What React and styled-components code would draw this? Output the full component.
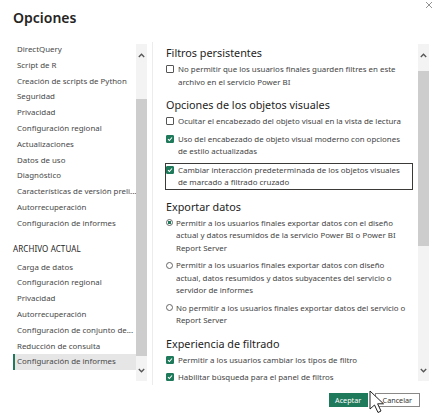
import React from 'react';
import styled, { createGlobalStyle } from 'styled-components';

const GREEN = '#1f7a5c';

const GlobalStyle = createGlobalStyle`
  html, body {
    margin: 0;
    padding: 0;
    background: #fff;
  }
  body {
    font-family: "Noto Sans", "Open Sans", sans-serif;
    color: #333;
  }
`;

const general = [
  'DirectQuery',
  'Script de R',
  'Creación de scripts de Python',
  'Seguridad',
  'Privacidad',
  'Configuración regional',
  'Actualizaciones',
  'Datos de uso',
  'Diagnóstico',
  'Características de versión preli...',
  'Autorrecuperación',
  'Configuración de informes',
];

const current = [
  'Carga de datos',
  'Configuración regional',
  'Privacidad',
  'Autorrecuperación',
  'Configuración de conjunto de...',
  'Reducción de consulta',
  'Configuración de informes',
];

const Chevron = ({ down }) => (
  <svg width='7' height='5' viewBox='0 0 7 5'>
    <polyline
      points={down ? '0.8,1 3.5,3.8 6.2,1' : '0.8,4 3.5,1.2 6.2,4'}
      fill='none'
      stroke='#555'
      strokeWidth='1.3'
    />
  </svg>
);

const Scrollbar = ({ thumbTop, thumbHeight }) => (
  <Track>
    <ArrowCell>
      <Chevron />
    </ArrowCell>
    <Rail>
      <Thumb $top={thumbTop} $height={thumbHeight} />
    </Rail>
    <ArrowCell>
      <Chevron down />
    </ArrowCell>
  </Track>
);

const Check = ({ checked }) => (
  <CheckBox $checked={checked}>
    {checked && (
      <svg width='6' height='6' viewBox='0 0 6 6'>
        <polyline points='1,3.2 2.4,4.5 5,1.5' fill='none' stroke='#fff' strokeWidth='1.1' />
      </svg>
    )}
  </CheckBox>
);

const Option = ({ checked, lines }) => (
  <Item>
    <Check checked={checked} />
    <Label>
      {lines.map((l, i) => (
        <div key={i}>{l}</div>
      ))}
    </Label>
  </Item>
);

const RadioOption = ({ checked, lines }) => (
  <Item $radio>
    <Radio $checked={checked} />
    <Label>
      {lines.map((l, i) => (
        <div key={i}>{l}</div>
      ))}
    </Label>
  </Item>
);

const App = () => {
  return (
    <Dialog>
      <GlobalStyle />
      <Header>
        <Title>Opciones</Title>
        <Close>
          <svg width='8' height='8' viewBox='0 0 8 8'>
            <path d='M1 1 L7 7 M7 1 L1 7' stroke='#777' strokeWidth='0.8' />
          </svg>
        </Close>
      </Header>
      <Body>
        <Nav>
          <NavList>
            {general.map((t) => (
              <NavItem key={t}>{t}</NavItem>
            ))}
            <NavGroup>ARCHIVO ACTUAL</NavGroup>
            {current.map((t, i) => (
              <NavItem key={t + i} $selected={i === current.length - 1}>
                {t}
              </NavItem>
            ))}
          </NavList>
          <Scrollbar thumbTop={33} thumbHeight={257} />
        </Nav>
        <Content>
          <Inner>
            <Heading $first>Filtros persistentes</Heading>
            <Option
              lines={[
                'No permitir que los usuarios finales guarden filtres en este',
                'archivo en el servicio Power BI',
              ]}
            />
            <Heading>Opciones de los objetos visuales</Heading>
            <Option lines={['Ocultar el encabezado del objeto visual en la vista de lectura']} />
            <Option
              checked
              lines={['Uso del encabezado de objeto visual moderno con opciones', 'de estilo actualizadas']}
            />
            <Focused>
              <Option
                checked
                lines={['Cambiar interacción predeterminada de los objetos visuales', 'de marcado a filtrado cruzado']}
              />
            </Focused>
            <Heading>Exportar datos</Heading>
            <RadioOption
              checked
              lines={[
                'Permitir a los usuarios finales exportar datos con el diseño',
                'actual y datos resumidos de la servicio Power BI o Power BI',
                'Report Server',
              ]}
            />
            <RadioOption
              lines={[
                'Permitir a los usuarios finales exportar datos con diseño',
                'actual, datos resumidos y datos subyacentes del servicio o',
                'servidor de informes',
              ]}
            />
            <RadioOption
              lines={['No permitir a los usuarios finales exportar datos del servicio o', 'Report Server']}
            />
            <Heading>Experiencia de filtrado</Heading>
            <Option checked lines={['Permitir a los usuarios cambiar los tipos de filtro']} />
            <Option checked lines={['Habilitar búsqueda para el panel de filtros']} />
          </Inner>
          <Scrollbar thumbTop={5} thumbHeight={175} />
        </Content>
      </Body>
      <Footer>
        <PrimaryButton>Aceptar</PrimaryButton>
        <Button>Cancelar</Button>
        <Cursor>
          <svg width='17' height='24' viewBox='0 0 17 24'>
            <path
              d='M1 1 L1 19 L5.5 15 L9 22.5 L12 21 L8.6 13.8 L14.5 13.8 Z'
              fill='#fff'
              stroke='#222'
              strokeWidth='1'
              strokeLinejoin='round'
            />
          </svg>
        </Cursor>
      </Footer>
    </Dialog>
  );
};

export default App;

const Dialog = styled.div`
  width: 437px;
  height: 416px;
  display: flex;
  flex-direction: column;
  overflow: hidden;
  background: #fff;
`;

const Header = styled.div`
  height: 42px;
  box-sizing: border-box;
  display: flex;
  justify-content: space-between;
  align-items: flex-start;
  padding: 8px 4px 0 13px;
`;

const Title = styled.div`
  font-size: 14px;
  font-weight: 600;
  line-height: 20px;
  color: #252423;
`;

const Close = styled.div`
  margin-top: -7px;
  width: 8px;
  height: 8px;
  display: flex;
`;

const Body = styled.div`
  flex: 1;
  display: flex;
  min-height: 0;
`;

const Nav = styled.div`
  width: 152px;
  box-sizing: border-box;
  display: flex;
  align-items: flex-start;
  padding: 0 5px 0 13px;
`;

const NavList = styled.div`
  flex: 1;
  min-width: 0;
`;

const NavItem = styled.div`
  height: 15.8px;
  line-height: 15.8px;
  font-size: 7.9px;
  color: #484848;
  padding-left: 2px;
  border-left: 2px solid ${(p) => (p.$selected ? GREEN : 'transparent')};
  background: ${(p) => (p.$selected ? '#e6e6e6' : 'transparent')};
  white-space: nowrap;
  overflow: hidden;
`;

const NavGroup = styled.div`
  margin: 9px 0 3px;
  height: 16px;
  line-height: 16px;
  font-size: 8px;
  color: #252423;
  letter-spacing: 0.1px;
`;

const Track = styled.div`
  width: 11px;
  height: 337px;
  margin-top: 2px;
  flex-shrink: 0;
  display: flex;
  flex-direction: column;
  background: #f3f3f3;
`;

const ArrowCell = styled.div`
  height: 22px;
  display: flex;
  align-items: center;
  justify-content: center;
`;

const Rail = styled.div`
  flex: 1;
  display: flex;
  justify-content: center;
`;

const Thumb = styled.div`
  width: 11px;
  margin-top: ${(p) => p.$top}px;
  height: ${(p) => p.$height}px;
  background: #cdcdcd;
`;

const Content = styled.div`
  flex: 1;
  display: flex;
  align-items: flex-start;
  border-left: 1px solid #ececec;
  padding-right: 8px;
`;

const Inner = styled.div`
  flex: 1;
  padding: 3px 5px 0 13px;
  min-width: 0;
`;

const Heading = styled.div`
  margin: ${(p) => (p.$first ? '0' : '9px')} 0 2px;
  font-size: 10.8px;
  line-height: 16px;
  color: #252423;
  white-space: nowrap;
`;

const Item = styled.div`
  display: flex;
  align-items: flex-start;
  gap: ${(p) => (p.$radio ? 3 : 4)}px;
  & + & {
    margin-top: 5px;
  }
`;

const Label = styled.div`
  font-size: 7.9px;
  line-height: 12.5px;
  color: #444;
  white-space: nowrap;
`;

const CheckBox = styled.div`
  width: 8px;
  height: 8px;
  box-sizing: border-box;
  margin-top: 2.25px;
  flex-shrink: 0;
  border: 1px solid ${(p) => (p.$checked ? GREEN : '#555')};
  background: ${(p) => (p.$checked ? GREEN : '#fff')};
  border-radius: 1px;
  display: flex;
  align-items: center;
  justify-content: center;
`;

const Radio = styled.div`
  width: 7px;
  height: 7px;
  box-sizing: border-box;
  margin-top: 2.75px;
  flex-shrink: 0;
  border-radius: 50%;
  border: 1px solid #666;
  background: ${(p) => (p.$checked ? `radial-gradient(circle, ${GREEN} 0 1.6px, #fff 2px)` : '#fff')};
`;

const Focused = styled.div`
  margin: 5px 0 0 -1px;
  border: 1px solid #3b3a39;
  & + ${Item} {
    margin-top: 5px;
  }
`;

const Footer = styled.div`
  position: relative;
  height: 31px;
  box-sizing: border-box;
  display: flex;
  justify-content: flex-end;
  align-items: flex-start;
  gap: 7px;
  padding: 8px 17px 0 0;
`;

const Button = styled.div`
  height: 14px;
  box-sizing: border-box;
  padding: 0 7px;
  display: flex;
  align-items: center;
  font-size: 7.2px;
  color: #333;
  background: #fff;
  border: 1px solid #8a8886;
`;

const PrimaryButton = styled(Button)`
  width: 39px;
  justify-content: center;
  color: #fff;
  background: ${GREEN};
  border-color: ${GREEN};
`;

const Cursor = styled.div`
  position: absolute;
  left: 369px;
  top: 5px;
  display: flex;
  pointer-events: none;
`;
